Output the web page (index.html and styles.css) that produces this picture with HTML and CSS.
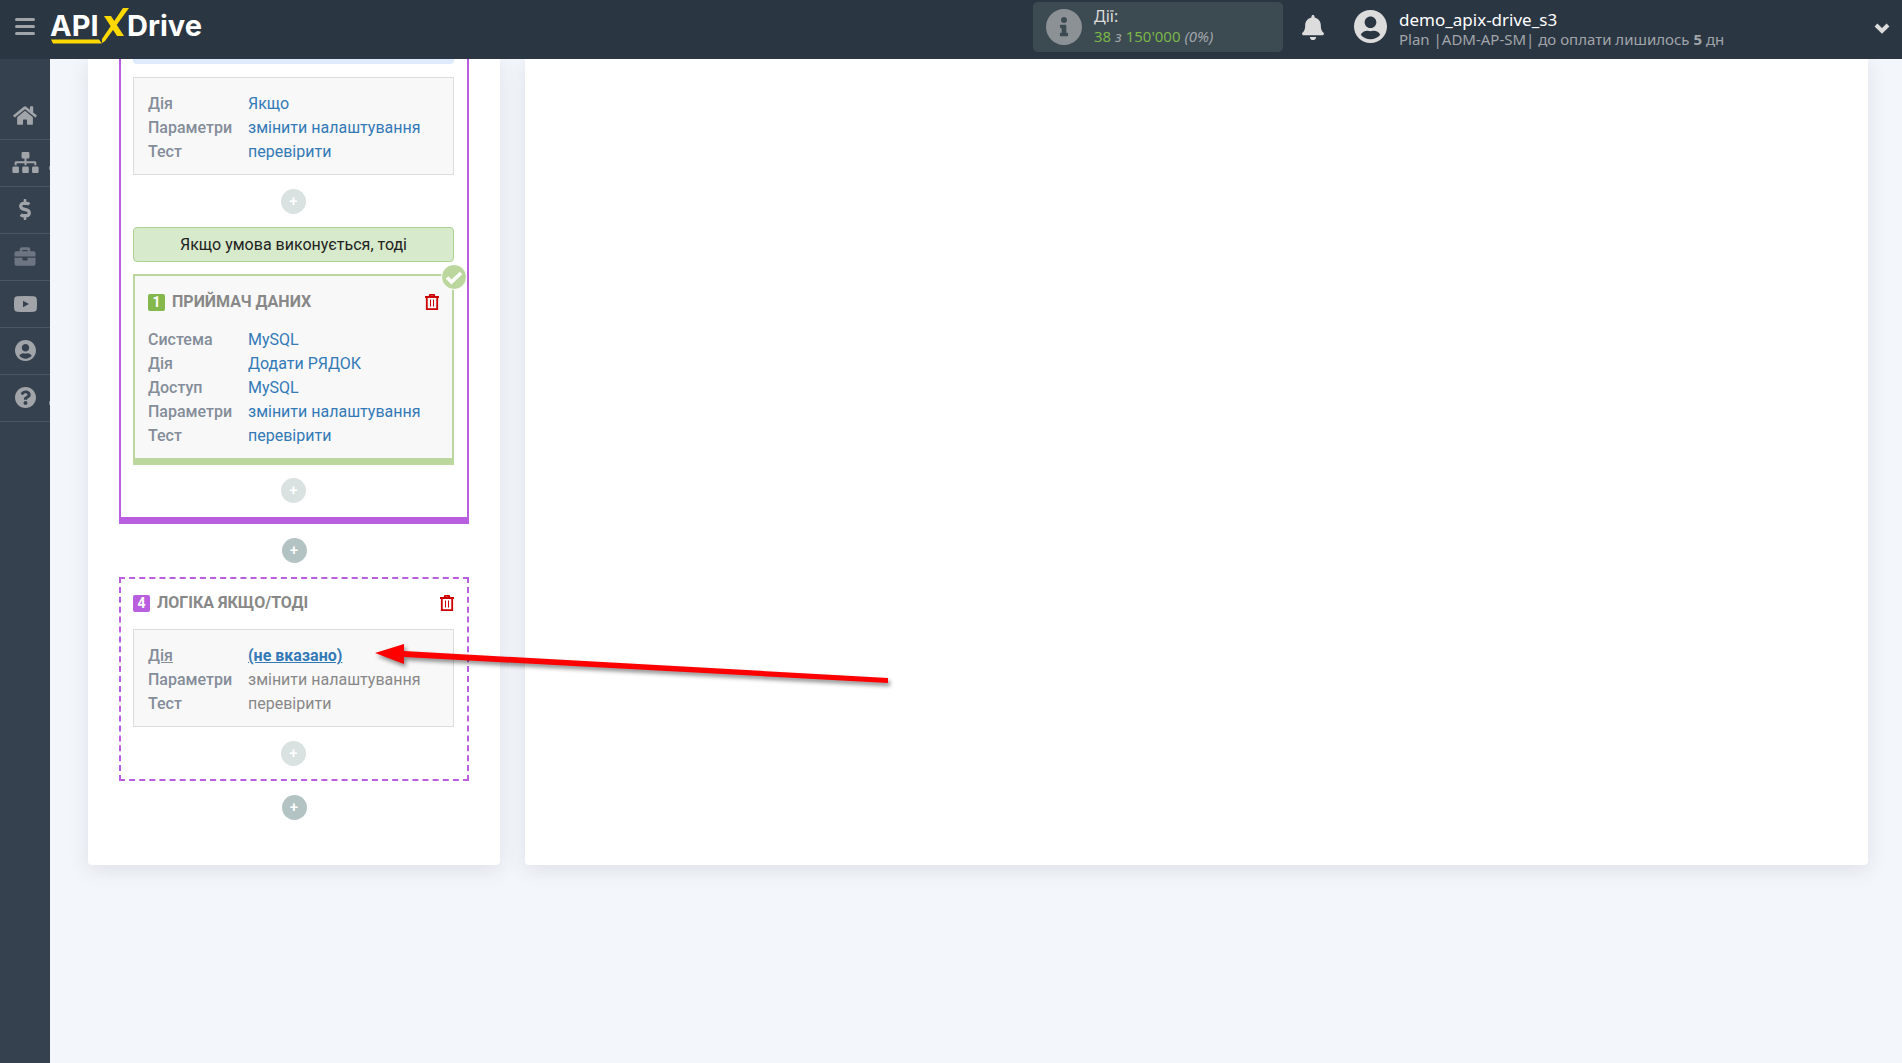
FILE: index.html
```html
<!DOCTYPE html>
<html lang="uk">
<head>
    <meta charset="UTF-8">
    <meta name="viewport" content="width=device-width, initial-scale=1.0">
    <title>ApiX-Drive</title>
    <link rel="stylesheet" href="styles.css">
</head>
<body>
    <header class="header">
        <button class="menu-btn" type="button" aria-label="Меню">
            <svg width="20" height="17" viewBox="0 0 20 17"><path d="M1.5 1.5h17M1.5 8.5h17M1.5 15.5h17" stroke="currentColor" stroke-width="3" stroke-linecap="round"/></svg>
        </button>
        <a class="logo" href="#" aria-label="ApiX-Drive">
            <svg width="156" height="40" viewBox="0 0 156 40">
                <text class="logo-text" x="0" y="31">API</text>
                <text class="logo-text" x="77" y="31">Drive</text>
                <path d="M1 34.500h48l3 4H3z" fill="#ffd800"/>
                <path d="M73 3h6L55 36l-3 2v-4z" fill="#ffd800"/>
                <path d="M54 11h7l13 20h-7z" fill="#ffd800"/>
            </svg>
        </a>
        <div class="usage">
            <svg width="36" height="36" viewBox="8 8 496 496"><path fill="currentColor" d="M256 8C119.043 8 8 119.083 8 256c0 136.997 111.043 248 248 248s248-111.003 248-248C504 119.083 392.957 8 256 8zm0 110c23.196 0 42 18.804 42 42s-18.804 42-42 42-42-18.804-42-42 18.804-42 42-42zm56 254c0 6.627-5.373 12-12 12h-88c-6.627 0-12-5.373-12-12v-24c0-6.627 5.373-12 12-12h12v-64h-12c-6.627 0-12-5.373-12-12v-24c0-6.627 5.373-12 12-12h64c6.627 0 12 5.373 12 12v100h12c6.627 0 12 5.373 12 12v24z"/></svg>
            <div>
                <div class="usage-title">Дії:</div>
                <div class="usage-count"><b>38</b> з <b>150'000</b> (0%)</div>
            </div>
        </div>
        <button class="bell-btn" type="button" aria-label="Сповіщення">
            <svg width="22" height="25" viewBox="0 0 448 512"><path fill="currentColor" d="M224 512c35.32 0 63.97-28.65 63.97-64H160.03c0 35.35 28.65 64 63.97 64zm215.39-149.71c-19.32-20.76-55.47-51.99-55.47-154.29 0-77.7-54.48-139.9-127.94-155.16V32c0-17.67-14.32-32-31.98-32s-31.98 14.33-31.98 32v20.84C118.56 68.1 64.08 130.3 64.08 208c0 102.3-36.15 133.53-55.47 154.29-6 6.45-8.66 14.16-8.61 21.71.11 16.4 12.98 32 32.1 32h383.8c19.12 0 32-15.6 32.1-32 .05-7.55-2.61-15.27-8.61-21.71z"/></svg>
        </button>
        <button class="account" type="button">
            <svg width="33" height="33" viewBox="0 8 496 496"><path fill="currentColor" d="M248 8C111 8 0 119 0 256s111 248 248 248 248-111 248-248S385 8 248 8zm0 96c48.6 0 88 39.4 88 88s-39.4 88-88 88-88-39.4-88-88 39.4-88 88-88zm0 344c-58.7 0-111.3-26.6-146.5-68.2 18.8-35.4 55.6-59.8 98.5-59.8 2.4 0 4.8.4 7.1 1.1 13 4.2 26.6 6.9 40.9 6.9 14.3 0 28-2.7 40.9-6.9 2.3-.7 4.7-1.1 7.1-1.1 42.9 0 79.7 24.4 98.5 59.8C359.3 421.4 306.7 448 248 448z"/></svg>
            <span class="account-text">
                <span class="account-name">demo_apix-drive_s3</span>
                <span class="account-plan">Plan |ADM-AP-SM| до оплати лишилось <b>5</b> дн</span>
            </span>
            <svg class="chevron" width="16" height="12" viewBox="0 0 16 12"><path d="M2 3l6 6 6-6" fill="none" stroke="currentColor" stroke-width="4"/></svg>
        </button>
    </header>

    <div class="layout">
        <nav class="sidebar">
            <a href="#" aria-label="Головна">
                <svg width="24" height="21" viewBox="0 0 576 512"><path d="M280.37 148.26L96 300.11V464a16 16 0 0 0 16 16l112.06-.29a16 16 0 0 0 15.92-16V368a16 16 0 0 1 16-16h64a16 16 0 0 1 16 16v95.64a16 16 0 0 0 16 16.05L464 480a16 16 0 0 0 16-16V300L295.67 148.26a12.19 12.19 0 0 0-15.3 0zM571.6 251.47L488 182.56V44.05a12 12 0 0 0-12-12h-56a12 12 0 0 0-12 12v72.61L318.47 43a48 48 0 0 0-61 0L4.34 251.47a12 12 0 0 0-1.6 16.9l25.5 31A12 12 0 0 0 45.15 301l235.22-193.74a12.19 12.19 0 0 1 15.3 0L530.9 301a12 12 0 0 0 16.9-1.6l25.5-31a12 12 0 0 0-1.7-16.93z"/></svg>
            </a>
            <a href="#" class="has-menu" aria-label="Зв'язки">
                <svg width="27" height="21" viewBox="0 0 640 512"><path d="M128 352H32c-17.67 0-32 14.33-32 32v96c0 17.67 14.33 32 32 32h96c17.67 0 32-14.33 32-32v-96c0-17.67-14.33-32-32-32zm-24-80h192v48h48v-48h192v48h48v-57.59c0-21.17-17.23-38.41-38.41-38.41H344v-64h40c17.67 0 32-14.33 32-32V32c0-17.67-14.33-32-32-32H256c-17.67 0-32 14.33-32 32v96c0 17.67 14.33 32 32 32h40v64H94.41C73.23 224 56 241.23 56 262.41V320h48v-48zm264 80h-96c-17.67 0-32 14.33-32 32v96c0 17.67 14.33 32 32 32h96c17.67 0 32-14.33 32-32v-96c0-17.67-14.33-32-32-32zm240 0h-96c-17.67 0-32 14.33-32 32v96c0 17.67 14.33 32 32 32h96c17.67 0 32-14.33 32-32v-96c0-17.67-14.33-32-32-32z"/></svg>
            </a>
            <a href="#" aria-label="Оплата">
                <svg width="12" height="21" viewBox="0 0 288 512"><path d="M209.2 233.4l-108-31.6C88.7 198.2 80 186.5 80 173.5c0-16.3 13.2-29.5 29.5-29.5h66.3c12.2 0 24.2 3.7 34.2 10.5 6.1 4.1 14.3 3.1 19.5-2l34.8-34c7.1-6.9 6.1-18.4-1.8-24.5C238 74.8 207.4 64.1 176 64V16c0-8.8-7.2-16-16-16h-32c-8.8 0-16 7.2-16 16v48h-2.5C45.8 64-5.4 118.7.5 183.6c4.2 46.1 39.4 83.6 83.8 96.6l102.5 30c12.5 3.7 21.2 15.3 21.2 28.3 0 16.3-13.2 29.5-29.5 29.5h-66.3C100 368 88 364.3 78 357.5c-6.1-4.1-14.3-3.1-19.5 2l-34.8 34c-7.1 6.9-6.1 18.4 1.8 24.5 24.5 19.2 55.1 29.9 86.5 30v48c0 8.8 7.2 16 16 16h32c8.8 0 16-7.2 16-16v-48.2c46.6-.9 90.3-28.6 105.7-72.7 21.5-61.6-14.6-124.8-72.5-141.7z"/></svg>
            </a>
            <a href="#" class="muted" aria-label="Проєкти">
                <svg width="22" height="21" viewBox="0 0 512 512"><path d="M320 336c0 8.84-7.16 16-16 16h-96c-8.84 0-16-7.16-16-16v-48H0v144c0 25.6 22.4 48 48 48h416c25.6 0 48-22.4 48-48V288H320v48zm144-208h-80V80c0-25.6-22.4-48-48-48H176c-25.6 0-48 22.4-48 48v48H48c-25.6 0-48 22.4-48 48v80h512v-80c0-25.6-22.4-48-48-48zm-144 0H192V96h128v32z"/></svg>
            </a>
            <a href="#" aria-label="Відео">
                <svg width="23" height="16" viewBox="0 0 23 16"><path fill-rule="evenodd" d="M3 .3Q11.500-.3 20 .3Q22.600.5 22.800 3Q23.200 8 22.800 13Q22.600 15.500 20 15.700Q11.500 16.300 3 15.700Q.4 15.500.2 13Q-.2 8 .2 3Q.4.5 3 .3zM9 4.800v6.400l6-3.200z"/></svg>
            </a>
            <a href="#" aria-label="Профіль">
                <svg width="21" height="21" viewBox="0 8 496 496"><path d="M248 8C111 8 0 119 0 256s111 248 248 248 248-111 248-248S385 8 248 8zm0 96c48.6 0 88 39.4 88 88s-39.4 88-88 88-88-39.4-88-88 39.4-88 88-88zm0 344c-58.7 0-111.3-26.6-146.5-68.2 18.8-35.4 55.6-59.8 98.5-59.8 2.4 0 4.8.4 7.1 1.1 13 4.2 26.6 6.9 40.9 6.9 14.3 0 28-2.7 40.9-6.9 2.3-.7 4.7-1.1 7.1-1.1 42.9 0 79.7 24.4 98.5 59.8C359.3 421.4 306.7 448 248 448z"/></svg>
            </a>
            <a href="#" class="has-menu" aria-label="Допомога">
                <svg width="21" height="21" viewBox="8 8 496 496"><path d="M504 256c0 136.997-111.043 248-248 248S8 392.997 8 256C8 119.083 119.043 8 256 8s248 111.083 248 248zM262.655 90c-54.497 0-89.255 22.957-116.549 63.758-3.536 5.286-2.353 12.415 2.715 16.258l34.699 26.31c5.205 3.947 12.621 3.008 16.665-2.122 17.864-22.658 30.113-35.797 57.303-35.797 20.429 0 45.698 13.148 45.698 32.958 0 14.976-12.363 22.667-32.534 33.976C247.128 238.528 216 254.941 216 296v4c0 6.627 5.373 12 12 12h56c6.627 0 12-5.373 12-12v-1.333c0-28.462 83.186-29.647 83.186-106.667 0-58.002-60.165-102-116.531-102zM256 338c-25.365 0-46 20.635-46 46 0 25.364 20.635 46 46 46s46-20.636 46-46c0-25.365-20.635-46-46-46z"/></svg>
            </a>
        </nav>

        <main class="main">
            <section class="panel steps">
                <div class="logic">
                    <div class="note note-blue"></div>
                    <div class="card">
                        <dl class="params">
                            <dt>Дія</dt><dd><a href="#">Якщо</a></dd>
                            <dt>Параметри</dt><dd><a href="#">змінити налаштування</a></dd>
                            <dt>Тест</dt><dd><a href="#">перевірити</a></dd>
                        </dl>
                    </div>
                    <button class="add add-light" type="button" aria-label="Додати">+</button>
                    <div class="note note-green">Якщо умова виконується, тоді</div>
                    <div class="card card-done">
                        <svg class="check" width="26" height="26" viewBox="0 0 26 26"><circle cx="13" cy="13" r="12.5" fill="#bcd79e" stroke="#fff"/><path d="M6 13.5l4.500 4.500L20 9" fill="none" stroke="#fff" stroke-width="3.500"/></svg>
                        <div class="title">
                            <span class="badge">1</span>
                            <h2>ПРИЙМАЧ ДАНИХ</h2>
                            <button class="trash" type="button" aria-label="Видалити">
                                <svg width="14" height="16" viewBox="0 0 14 16" fill="none" stroke="currentColor"><path stroke-width="1.800" d="M0 3h14M1.800 3v12.100h10.400V3M4.500 2.500l.5-1.600h4l.5 1.600"/><path d="M5.500 5.500v7M8.500 5.500v7"/></svg>
                            </button>
                        </div>
                        <dl class="params">
                            <dt>Система</dt><dd><a href="#">MySQL</a></dd>
                            <dt>Дія</dt><dd><a href="#">Додати РЯДОК</a></dd>
                            <dt>Доступ</dt><dd><a href="#">MySQL</a></dd>
                            <dt>Параметри</dt><dd><a href="#">змінити налаштування</a></dd>
                            <dt>Тест</dt><dd><a href="#">перевірити</a></dd>
                        </dl>
                    </div>
                    <button class="add add-light" type="button" aria-label="Додати">+</button>
                </div>
                <button class="add" type="button" aria-label="Додати">+</button>
                <div class="logic logic-new">
                    <div class="title">
                        <span class="badge">4</span>
                        <h2>ЛОГІКА ЯКЩО/ТОДІ</h2>
                        <button class="trash" type="button" aria-label="Видалити">
                            <svg width="14" height="16" viewBox="0 0 14 16" fill="none" stroke="currentColor"><path stroke-width="1.800" d="M0 3h14M1.800 3v12.100h10.400V3M4.500 2.500l.5-1.600h4l.5 1.600"/><path d="M5.500 5.500v7M8.500 5.500v7"/></svg>
                        </button>
                    </div>
                    <div class="card">
                        <dl class="params">
                            <dt class="current">Дія</dt><dd><a href="#" class="current">(не вказано)</a></dd>
                            <dt>Параметри</dt><dd>змінити налаштування</dd>
                            <dt>Тест</dt><dd>перевірити</dd>
                        </dl>
                    </div>
                    <button class="add add-light" type="button" aria-label="Додати">+</button>
                </div>
                <button class="add" type="button" aria-label="Додати">+</button>
            </section>
            <section class="panel content"></section>

            <svg class="arrow" width="524" height="50" viewBox="0 0 524 50">
                <path d="M5 11L34 2v7L518 36v5L34 15v7z" fill="#f00"/>
            </svg>
        </main>
    </div>
</body>
</html>
```

FILE: styles.css
```css
* {
    box-sizing: border-box;
}

body {
    margin: 0;
    min-height: 100vh;
    display: flex;
    flex-direction: column;
    font-family: Roboto, sans-serif;
    font-size: 16px;
    line-height: 24px;
    color: #888;
    background-color: #f3f6fb;
}

a {
    color: #337ab7;
    text-decoration: none;
}

button {
    padding: 0;
    border: none;
    background: none;
    font: inherit;
    color: inherit;
    cursor: pointer;
}

svg {
    display: block;
    flex-shrink: 0;
}

/* Header */
.header {
    position: sticky;
    top: 0;
    z-index: 10;
    display: flex;
    align-items: flex-start;
    height: 59px;
    padding: 0 12px 0 15px;
    background-color: #2b3643;
    color: #dcdcdc;
    font-family: "Noto Sans", sans-serif;
}

.menu-btn {
    margin-top: 18px;
    color: #a1a5a9;
}

.logo {
    margin: 5px auto 0 15px;
}

.logo-text {
    font-family: Inter, sans-serif;
    font-size: 29px;
    font-weight: 700;
    fill: #fff;
}

.usage {
    display: flex;
    gap: 12px;
    width: 250px;
    height: 50px;
    margin: 2px 19px 0 0;
    padding: 7px 13px;
    border-radius: 5px;
    background-color: #3c4a52;
    color: #8b9194;
}

.usage-title {
    margin-top: -3px;
    line-height: 20px;
    color: #dcdcdc;
}

.usage-count {
    font-size: 15px;
    line-height: 20px;
    font-style: italic;
    color: #a1a5a9;
}

.usage-count b {
    font-style: normal;
    font-weight: 400;
    color: #7ab648;
}

.bell-btn {
    margin: 15px 30px 0 0;
}

.account {
    display: flex;
    align-items: flex-start;
    gap: 12px;
    width: 536px;
    padding-top: 10px;
    text-align: left;
}

.account-text {
    display: flex;
    flex-direction: column;
    line-height: 20px;
}

.account-name {
    color: #fff;
    font-size: 17px;
}

.account-plan {
    font-size: 15px;
    line-height: 18px;
    color: #a1a5a9;
}

.chevron {
    margin: 12px 0 0 auto;
}

/* Sidebar */
.layout {
    flex: 1;
    display: flex;
}

.sidebar {
    width: 50px;
    padding-top: 34px;
    background-color: #36414f;
}

.sidebar a {
    position: relative;
    display: flex;
    align-items: center;
    justify-content: center;
    height: 47px;
    padding-bottom: 1px;
    border-bottom: 1px solid #4a5562;
    color: #a1a5a9;
}

.sidebar svg {
    fill: currentColor;
}

.sidebar .muted {
    color: #6d7582;
}

.has-menu::after {
    content: "";
    position: absolute;
    right: 0;
    bottom: 16px;
    width: 1px;
    height: 4px;
    background-color: #7d858e;
}

/* Panels */
.main {
    position: relative;
    flex: 1;
    display: flex;
    align-items: stretch;
    align-self: flex-start;
    gap: 25px;
    padding: 0 34px 0 38px;
}

.panel {
    background-color: #fff;
    border-radius: 0 0 4px 4px;
    box-shadow: 0 5px 20px rgba(69, 65, 78, 0.12);
}

.steps {
    width: 412px;
    padding: 0 31px 45px;
}

.content {
    flex: 1;
}

.logic {
    padding: 0 13px 14px 12px;
    border: 2px solid #ba5ee0;
    border-top: none;
    border-bottom-width: 7px;
}

.logic-new {
    padding-top: 12px;
    padding-bottom: 13px;
    border: 2px dashed #ba5ee0;
}

.note {
    border-radius: 4px;
    text-align: center;
}

.note-blue {
    height: 5px;
    margin-bottom: 13px;
    border-radius: 0 0 4px 4px;
    background-color: #deebfd;
}

.note-green {
    margin-bottom: 12px;
    padding: 5px;
    line-height: 23px;
    border: 1px solid #aed094;
    background-color: #d7eacb;
    color: #222;
}

.card {
    position: relative;
    padding: 14px 14px 10px;
    border: 1px solid #ddd;
    background-color: #f8f8f8;
}

.card-done {
    padding: 14px 13px 10px;
    border: 2px solid #bcd79e;
    border-bottom-width: 7px;
}

.check {
    position: absolute;
    top: -12px;
    right: -15px;
}

.title {
    display: flex;
    align-items: center;
    margin-bottom: 14px;
}

.title h2 {
    margin: 0 auto 0 7px;
    font-size: 16px;
    font-weight: 700;
}

.badge {
    width: 17px;
    height: 17px;
    border-radius: 2px;
    background-color: #84b84c;
    color: #fff;
    font-size: 14px;
    font-weight: 700;
    line-height: 17px;
    text-align: center;
}

.logic-new .badge {
    background-color: #ba5ee0;
}

.trash {
    color: #c00;
}

.params {
    display: grid;
    grid-template-columns: 100px 1fr;
    margin: 0;
}

.params dt {
    font-weight: 500;
    color: #848d99;
}

.params dd {
    margin: 0;
    white-space: nowrap;
}

.current {
    text-decoration: underline;
}

a.current {
    font-weight: 700;
}

/* Round plus buttons between the steps */
.add {
    display: block;
    width: 25px;
    height: 25px;
    margin: 14px auto;
    border-radius: 50%;
    background-color: #b3c3c3;
    color: #fff;
    font-size: 15px;
    font-weight: 500;
    line-height: 25px;
    text-align: center;
}

.add-light {
    margin: 14px auto 13px;
    background-color: #d9e1e1;
}

.card-done + .add-light {
    margin-top: 13px;
}

.steps > .add:last-child,
.logic > .add:last-child {
    margin-bottom: 0;
}

.arrow {
    position: absolute;
    top: 583px;
    left: 320px;
    filter: drop-shadow(2px 3px 2px rgba(0, 0, 0, 0.45));
    pointer-events: none;
}
```
